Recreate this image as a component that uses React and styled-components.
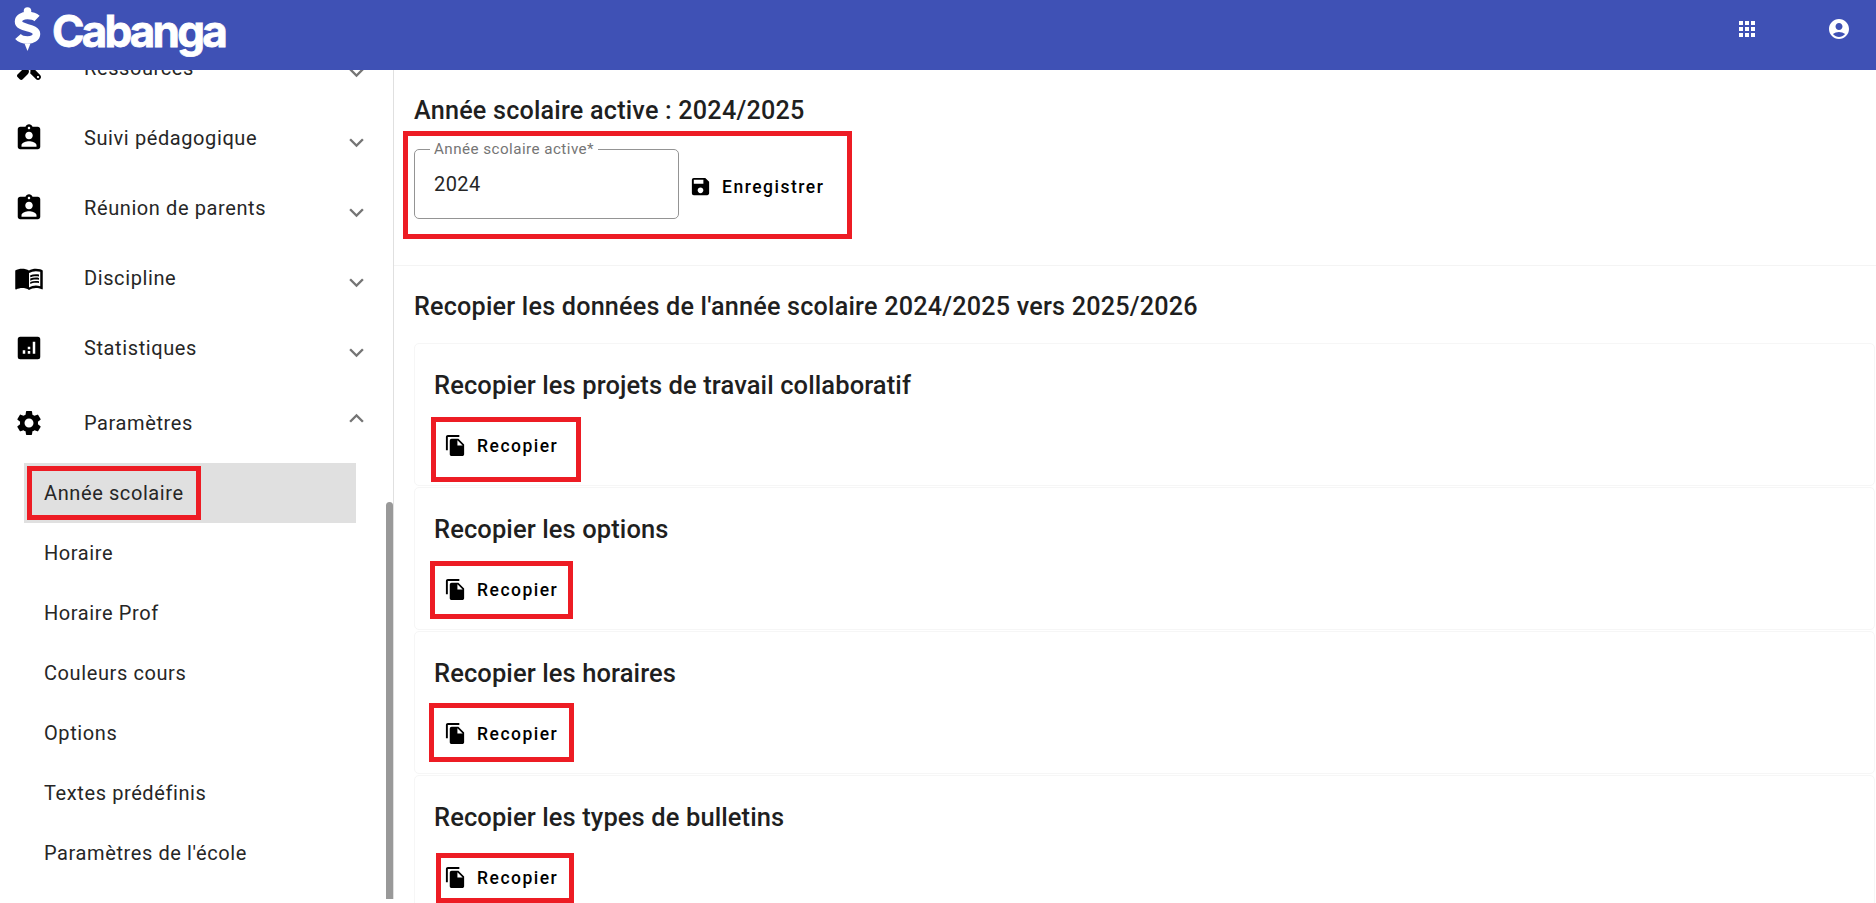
import React from 'react'
import styled, { createGlobalStyle } from 'styled-components'
import {
  MdApps,
  MdAccountCircle,
  MdAssignmentInd,
  MdMenuBook,
  MdSettings,
  MdExpandMore,
  MdExpandLess,
  MdSave,
  MdFileCopy,
} from 'react-icons/md'
import { FaTools } from 'react-icons/fa'

const GlobalStyle = createGlobalStyle`
  html, body {
    margin: 0;
    padding: 0;
    height: 100%;
    overflow: hidden;
    background: #fff;
    font-family: Roboto, "Liberation Sans", sans-serif;
    color: #212121;
  }
  * {
    box-sizing: border-box;
  }
`

const Page = styled.div`
  display: flex;
  flex-direction: column;
  height: 903px;
  overflow: hidden;
`

const Header = styled.header`
  position: relative;
  z-index: 2;
  flex: 0 0 70px;
  display: flex;
  justify-content: space-between;
  background: #3f51b5;
  color: #fff;
  padding: 0 25px 0 14px;
`

const Logo = styled.div`
  display: flex;
  align-items: flex-start;
  gap: 11px;
  padding-top: 7px;

  svg {
    display: block;
  }
`

const LogoText = styled.span`
  font-family: Inter, sans-serif;
  font-size: 44px;
  line-height: 46px;
  font-weight: 700;
  letter-spacing: -2.8px;
  -webkit-text-stroke: 0.8px #fff;
  margin-top: 1px;
`

const HeaderIcons = styled.div`
  display: flex;
  gap: 68px;
  padding-top: 17px;
  font-size: 24px;

  svg {
    display: block;
  }
`

const Body = styled.div`
  flex: 1;
  display: flex;
  min-height: 0;
`

const Sidebar = styled.aside`
  position: relative;
  flex: 0 0 394px;
  border-right: 1px solid #e0e0e0;
  overflow: hidden;
  height: 829px;
`

const Nav = styled.nav`
  margin-top: -37px;
`

const NavRow = styled.div`
  display: flex;
  align-items: center;
  height: ${(p) => p.$height || 70}px;
  padding: 0 22px 0 14px;
  font-size: 20px;
  letter-spacing: 0.6px;
  color: #262626;
`

const NavIcon = styled.span`
  flex: 0 0 70px;
  display: flex;
  font-size: 30px;
  color: #000;
`

const ToolsIcon = styled(FaTools)`
  font-size: 24px;
  margin-left: 3px;
  transform: scaleX(-1);
`

const NavLabel = styled.span`
  flex: 1;
`

const Chevron = styled.span`
  display: flex;
  font-size: 29px;
  color: #757575;
  transform: translateY(${(p) => (p.$open ? -5 : 4)}px);
`

const SubList = styled.div`
  margin: 0 37px 0 24px;
`

const SubItem = styled.div`
  position: relative;
  display: flex;
  align-items: center;
  height: 60px;
  padding-left: 20px;
  font-size: 20px;
  letter-spacing: 0.6px;
  color: #262626;
  background: ${(p) => (p.$active ? '#e0e0e0' : 'transparent')};
`

const Scrollbar = styled.div`
  position: absolute;
  top: 432px;
  right: 0;
  bottom: 0;
  width: 7px;
  border-radius: 4px 4px 0 0;
  background: #999;
`

const Highlight = styled.span`
  position: absolute;
  top: ${(p) => p.$top}px;
  left: ${(p) => p.$left}px;
  width: ${(p) => p.$w}px;
  height: ${(p) => p.$h}px;
  border: 5px solid #ed1c24;
  pointer-events: none;
`

const Main = styled.main`
  flex: 1;
  min-width: 0;
`

const TopSection = styled.section`
  padding: 24px 20px 46px;
  border-bottom: 1px solid #f4f4f4;
`

const Title = styled.h2`
  margin: 0;
  font-size: 25.2px;
  line-height: 34px;
  font-weight: 500;
  letter-spacing: 0.2px;
  color: #1f1f1f;
`

const FormRow = styled.div`
  position: relative;
  display: flex;
  align-items: center;
  margin-top: 13px;
`

const Field = styled.fieldset`
  width: 265px;
  height: 78px;
  margin: 0;
  padding: 0 16px;
  border: 1px solid #949494;
  border-radius: 5px;
`

const FieldLegend = styled.legend`
  margin-left: -1px;
  padding: 0 4px;
  font-size: 15.2px;
  line-height: 16px;
  letter-spacing: 0.45px;
  color: #757575;
`

const FieldInput = styled.input`
  width: 100%;
  border: 0;
  outline: 0;
  padding: 0 0 0 3px;
  margin-top: 13px;
  height: 28px;
  background: transparent;
  font-family: inherit;
  font-size: 20px;
  letter-spacing: 0.4px;
  color: #262626;
`

const Button = styled.button`
  position: relative;
  display: inline-flex;
  align-items: center;
  gap: 10px;
  height: 43px;
  padding: 0 10px;
  margin-top: ${(p) => p.$mt || 0}px;
  border: 0;
  background: none;
  font-family: inherit;
  font-size: 17.5px;
  font-weight: 500;
  letter-spacing: 1.5px;
  color: #000;

  svg {
    display: block;
    font-size: 23px;
  }
`

const SectionTitle = styled(Title)`
  margin: 24px 0 19px 20px;
`

const Card = styled.article`
  height: 143px;
  margin: 0 1px 1px 20px;
  padding: 24px 19px 0;
  border: 1px solid #f6f6f6;
  border-radius: 5px;
`

const CardTitle = styled.h3`
  margin: 0 0 22px;
  font-size: 25.5px;
  line-height: 34px;
  font-weight: 500;
  letter-spacing: 0.1px;
  color: #1f1f1f;
`

const CardButtonRow = styled.div`
  display: flex;
`

const LogoMark = () => (
  <svg width="27" height="44" viewBox="0 0 27 44" fill="none">
    <circle cx="13.5" cy="4" r="3.8" fill="#fff" />
    <path
      d="M23 11.5c-2-2-5.500-3-9.500-3-5 0-9 2.300-9 6 0 7.500 18 5 18 12.500 0 3.500-4 6-9 6-4 0-7.500-1.200-9.500-3.500"
      stroke="#fff"
      strokeWidth="7.500"
    />
    <path d="M10.500 36.500h6L13.500 44z" fill="#fff" />
  </svg>
)

const StatsIcon = () => (
  <svg width="1em" height="1em" viewBox="0 0 24 24" fill="currentColor">
    <path
      fillRule="evenodd"
      d="M5 3h14a2 2 0 0 1 2 2v14a2 2 0 0 1-2 2H5a2 2 0 0 1-2-2V5a2 2 0 0 1 2-2zM7 13.800v2.700h2v-2.700zM11 11v2h2v-2zM11 14.300v2.200h2v-2.200zM15 7v9.500h2V7z"
    />
  </svg>
)

const navItems = [
  { label: 'Ressources', icon: ToolsIcon },
  { label: 'Suivi pédagogique', icon: MdAssignmentInd },
  { label: 'Réunion de parents', icon: MdAssignmentInd },
  { label: 'Discipline', icon: MdMenuBook },
  { label: 'Statistiques', icon: StatsIcon },
]

const subItems = ['Horaire', 'Horaire Prof', 'Couleurs cours', 'Options', 'Textes prédéfinis', "Paramètres de l'école"]

const cards = [
  { title: 'Recopier les projets de travail collaboratif', box: { $left: -3, $top: -7, $w: 150, $h: 65 } },
  { title: 'Recopier les options', box: { $left: -4, $top: -7, $w: 143, $h: 58 } },
  { title: 'Recopier les horaires', box: { $left: -5, $top: -9, $w: 145, $h: 59 } },
  { title: 'Recopier les types de bulletins', box: { $left: 2, $top: -3, $w: 138, $h: 50 } },
]

const App = () => {
  return (
    <Page>
      <GlobalStyle />
      <Header>
        <Logo>
          <LogoMark />
          <LogoText>Cabanga</LogoText>
        </Logo>
        <HeaderIcons>
          <MdApps />
          <MdAccountCircle />
        </HeaderIcons>
      </Header>
      <Body>
        <Sidebar>
          <Nav>
            {navItems.map(({ label, icon: Icon }) => (
              <NavRow key={label}>
                <NavIcon>
                  <Icon />
                </NavIcon>
                <NavLabel>{label}</NavLabel>
                <Chevron>
                  <MdExpandMore />
                </Chevron>
              </NavRow>
            ))}
            <NavRow $height={80}>
              <NavIcon>
                <MdSettings />
              </NavIcon>
              <NavLabel>Paramètres</NavLabel>
              <Chevron $open>
                <MdExpandLess />
              </Chevron>
            </NavRow>
            <SubList>
              <SubItem $active>
                Année scolaire
                <Highlight $left={3} $top={3} $w={174} $h={54} />
              </SubItem>
              {subItems.map((label) => (
                <SubItem key={label}>{label}</SubItem>
              ))}
            </SubList>
          </Nav>
          <Scrollbar />
        </Sidebar>
        <Main>
          <TopSection>
            <Title>Année scolaire active : 2024/2025</Title>
            <FormRow>
              <Field>
                <FieldLegend>Année scolaire active*</FieldLegend>
                <FieldInput readOnly value="2024" />
              </Field>
              <Button $mt={13}>
                <MdSave />
                Enregistrer
              </Button>
              <Highlight $left={-11} $top={-10} $w={449} $h={108} />
            </FormRow>
          </TopSection>
          <SectionTitle>Recopier les données de l'année scolaire 2024/2025 vers 2025/2026</SectionTitle>
          {cards.map((card) => (
            <Card key={card.title}>
              <CardTitle>{card.title}</CardTitle>
              <CardButtonRow>
                <Button>
                  <MdFileCopy />
                  Recopier
                  <Highlight {...card.box} />
                </Button>
              </CardButtonRow>
            </Card>
          ))}
        </Main>
      </Body>
    </Page>
  )
}

export default App
